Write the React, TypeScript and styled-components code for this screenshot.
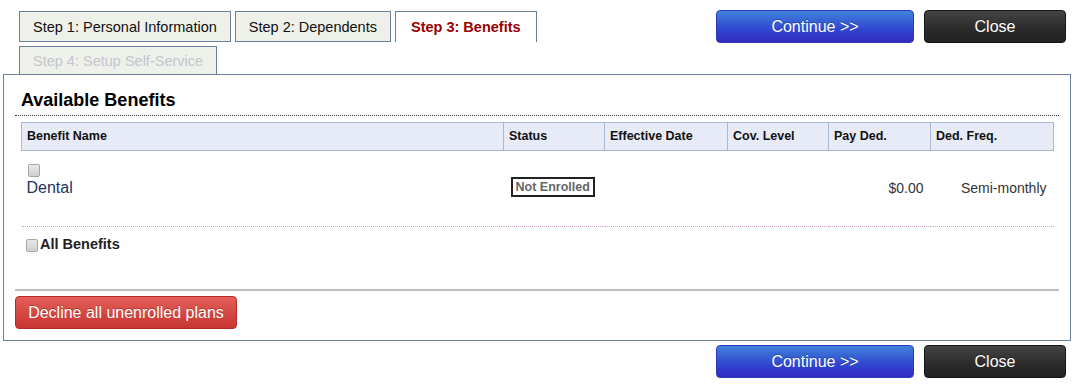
import React from 'react';
import styled, {createGlobalStyle} from 'styled-components';

const GlobalStyle = createGlobalStyle`
  body {
    margin: 0;
    background: #ffffff;
    font-family: "Liberation Sans", Arial, sans-serif;
    color: #222;
  }
`

type StepType = {
    title: string
    state: 'done' | 'active' | 'disabled'
}

type BenefitType = {
    name: string
    status: string
    effectiveDate: string
    covLevel: string
    payDed: string
    dedFreq: string
}

const steps: StepType[] = [
    {title: 'Step 1: Personal Information', state: 'done'},
    {title: 'Step 2: Dependents', state: 'done'},
    {title: 'Step 3: Benefits', state: 'active'},
    {title: 'Step 4: Setup Self-Service', state: 'disabled'},
]

const benefits: BenefitType[] = [
    {name: 'Dental', status: 'Not Enrolled', effectiveDate: '', covLevel: '', payDed: '$0.00', dedFreq: 'Semi-monthly'},
]

const Page = styled.div`
  width: 1077px;
`

const TopBar = styled.div`
  display: flex;
  justify-content: space-between;
  align-items: flex-start;
`

const Tabs = styled.div`
  display: flex;
  flex-wrap: wrap;
  align-items: flex-end;
  column-gap: 4px;
  row-gap: 4px;
  width: 560px;
  padding: 11px 0 0 19px;
`

const Tab = styled.div<{ $state: StepType['state'] }>`
  box-sizing: border-box;
  height: ${props => props.$state === 'disabled' ? '28px' : '31px'};
  display: flex;
  align-items: center;
  padding: 0 ${props => props.$state === 'active' ? '15px' : '13px'};
  font-size: 14.5px;
  border: 1px solid #6a7f99;
  border-bottom: ${props => props.$state === 'done' ? '1px solid #6a7f99' : 'none'};
  background: ${props => props.$state === 'active' ? '#ffffff' : '#eef0ea'};
  color: ${props => {
    if (props.$state === 'active') return '#990000'
    if (props.$state === 'disabled') return '#c4c6cc'
    return '#111'
  }};
  font-weight: ${props => props.$state === 'active' ? 'bold' : 'normal'};
  padding-top: ${props => props.$state === 'disabled' ? '1px' : '0'};
  white-space: nowrap;
`

const ButtonGroup = styled.div<{ $top: number }>`
  display: flex;
  justify-content: flex-end;
  gap: 10px;
  padding: ${props => props.$top}px 11px 0 0;
`

const ActionButton = styled.button<{ $variant: 'blue' | 'dark' | 'red', $width: number }>`
  box-sizing: border-box;
  width: ${props => props.$width}px;
  height: 33px;
  border-radius: 4px;
  font-family: "Liberation Sans", Arial, sans-serif;
  font-size: 16px;
  color: #fff;
  cursor: pointer;
  padding: 0;
  text-shadow: 0 -1px 0 rgba(0, 0, 0, 0.25);
  border: 1px solid ${props => {
    if (props.$variant === 'blue') return '#2a3ab8'
    if (props.$variant === 'dark') return '#151515'
    return '#b52b27'
  }};
  background: ${props => {
    if (props.$variant === 'blue') return 'linear-gradient(#3f82db, #3046cf 60%, #3129c3)'
    if (props.$variant === 'dark') return 'linear-gradient(#444444, #2a2a2a 60%, #222222)'
    return 'linear-gradient(#e5605b, #d2443f 60%, #c83632)'
  }};
`

const Panel = styled.div`
  box-sizing: border-box;
  width: 1068px;
  margin-left: 3px;
  border: 1px solid #6b7f99;
  padding: 0 11px 11px;
`

const Heading = styled.h2`
  margin: 0;
  padding: 14px 6px 4px;
  font-size: 18px;
  line-height: 22px;
  font-weight: bold;
  color: #000;
  border-bottom: 1px dotted #333;
`

const TableWrap = styled.div`
  padding: 6px 6px 0;
`

const Table = styled.table`
  width: 1032px;
  border-collapse: collapse;
  table-layout: fixed;
`

const HeadCell = styled.th`
  height: 27px;
  padding: 0 5px;
  text-align: left;
  font-size: 12.5px;
  line-height: 15px;
  font-weight: bold;
  color: #111;
  background: #e7ebf7;
  border: 1px solid #a9b9d2;
`

const Cell = styled.td<{ $align?: 'left' | 'right' }>`
  padding: 13px 7px 29px 5px;
  vertical-align: bottom;
  text-align: ${props => props.$align || 'left'};
  font-size: 14px;
  line-height: 18px;
  color: #333;
  border-bottom: 1px dotted #c9a3cc;
`

const NameText = styled.div`
  font-size: 16px;
  line-height: 18px;
  color: #24345e;
`

const StatusLine = styled.div`
  font-size: 16px;
  line-height: 18px;
  padding-left: 2px;
`

const StatusBadge = styled.span`
  display: inline-block;
  vertical-align: -5px;
  border: 2px solid #222;
  padding: 0 3px;
  font-size: 12.5px;
  line-height: 16px;
  font-weight: bold;
  color: #666;
`

const Checkbox = styled.input.attrs({type: 'checkbox'})`
  appearance: none;
  box-sizing: border-box;
  display: block;
  width: 12px;
  height: 13px;
  margin: 0 0 2px 1px;
  border: 1px solid #a6a6a6;
  border-radius: 2px;
  background: linear-gradient(#e8e8e8, #d0d0d0);
`

const AllRow = styled.label`
  display: flex;
  align-items: center;
  padding: 8px 0 0 11px;
  height: 18px;
  font-size: 14.5px;
  font-weight: bold;
  color: #222;
  & > input {
    margin: 2px 2px 0 0;
  }
`

const Divider = styled.div`
  height: 2px;
  margin-top: 36px;
  background: #bdbdbd;
`

const DeclineRow = styled.div`
  display: flex;
  padding-top: 5px;
`

const App = () => {
    return (
        <Page>
            <GlobalStyle/>
            <TopBar>
                <Tabs>
                    {steps.map(s => <Tab key={s.title} $state={s.state}>{s.title}</Tab>)}
                </Tabs>
                <ButtonGroup $top={10}>
                    <ActionButton $variant="blue" $width={198}>Continue &gt;&gt;</ActionButton>
                    <ActionButton $variant="dark" $width={142}>Close</ActionButton>
                </ButtonGroup>
            </TopBar>
            <Panel>
                <Heading>Available Benefits</Heading>
                <TableWrap>
                    <Table>
                        <colgroup>
                            <col style={{width: 482}}/>
                            <col style={{width: 101}}/>
                            <col style={{width: 123}}/>
                            <col style={{width: 101}}/>
                            <col style={{width: 102}}/>
                            <col style={{width: 123}}/>
                        </colgroup>
                        <thead>
                        <tr>
                            <HeadCell>Benefit Name</HeadCell>
                            <HeadCell>Status</HeadCell>
                            <HeadCell>Effective Date</HeadCell>
                            <HeadCell>Cov. Level</HeadCell>
                            <HeadCell>Pay Ded.</HeadCell>
                            <HeadCell>Ded. Freq.</HeadCell>
                        </tr>
                        </thead>
                        <tbody>
                        {benefits.map(b => (
                            <tr key={b.name}>
                                <Cell>
                                    <Checkbox/>
                                    <NameText>{b.name}</NameText>
                                </Cell>
                                <Cell>
                                    <StatusLine><StatusBadge>{b.status}</StatusBadge></StatusLine>
                                </Cell>
                                <Cell>{b.effectiveDate}</Cell>
                                <Cell>{b.covLevel}</Cell>
                                <Cell $align="right">{b.payDed}</Cell>
                                <Cell $align="right">{b.dedFreq}</Cell>
                            </tr>
                        ))}
                        </tbody>
                    </Table>
                </TableWrap>
                <AllRow>
                    <Checkbox/>
                    All Benefits
                </AllRow>
                <Divider/>
                <DeclineRow>
                    <ActionButton $variant="red" $width={222}>Decline all unenrolled plans</ActionButton>
                </DeclineRow>
            </Panel>
            <ButtonGroup $top={4}>
                <ActionButton $variant="blue" $width={198}>Continue &gt;&gt;</ActionButton>
                <ActionButton $variant="dark" $width={142}>Close</ActionButton>
            </ButtonGroup>
        </Page>
    );
};

export default App;
